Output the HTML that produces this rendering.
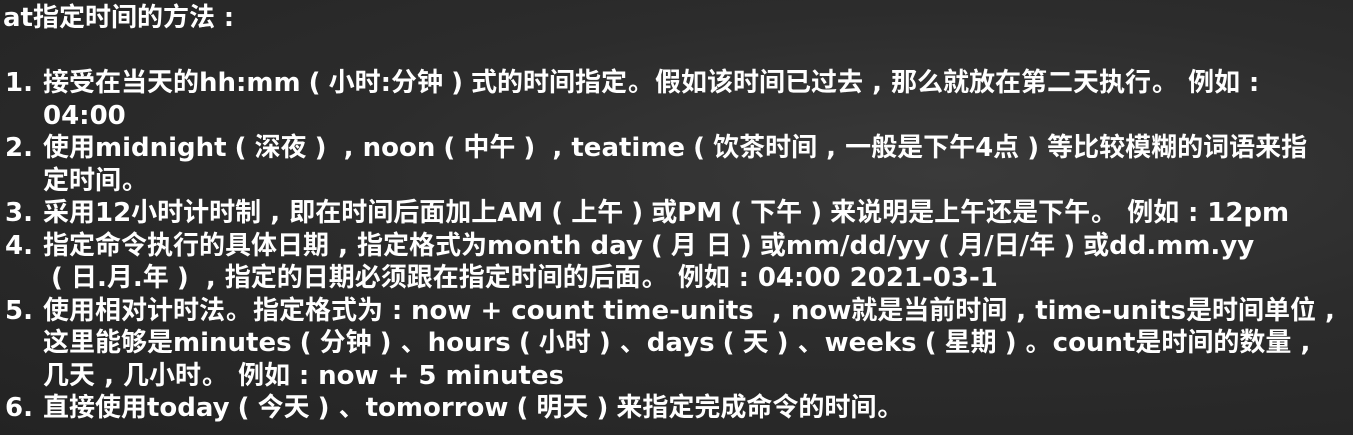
<!DOCTYPE html>
<html><head><meta charset="utf-8"><style>
html,body{margin:0;padding:0}
body{width:1353px;height:435px;overflow:hidden;background:radial-gradient(ellipse at 70% 40%,#3a3a3a 0%,#2c2c2c 45%,#232323 100%);color:#fff;font-family:"DejaVu Sans","Noto Sans CJK SC",sans-serif;font-weight:bold;font-size:26px;}
.w{position:absolute;left:0;top:2px;line-height:32.5px;white-space:nowrap}
.l{position:relative;padding-left:43px;height:32.5px}
.n{position:absolute;left:5px}
.t{padding-left:3px}
i{font-style:normal;display:inline-block;width:28px;text-align:center}
</style></head><body><div class="w">
<div class="t">at指定时间的方法<i>:</i></div>
<div>&nbsp;</div>
<div class="l"><span class="n">1.</span>接受在当天的hh:mm<i>(</i>小时:分钟<i>)</i>式的时间指定<i>。</i>假如该时间已过去<i>,</i>那么就放在第二天执行<i>。</i> 例如<i>:</i></div>
<div class="l">04:00</div>
<div class="l"><span class="n">2.</span>使用midnight<i>(</i>深夜<i>)</i><i>,</i>noon<i>(</i>中午<i>)</i><i>,</i>teatime<i>(</i>饮茶时间<i>,</i>一般是下午4点<i>)</i>等比较模糊的词语来指</div>
<div class="l">定时间<i>。</i></div>
<div class="l"><span class="n">3.</span>采用12小时计时制<i>,</i>即在时间后面加上AM<i>(</i>上午<i>)</i>或PM<i>(</i>下午<i>)</i>来说明是上午还是下午<i>。</i> 例如<i>:</i>12pm</div>
<div class="l"><span class="n">4.</span>指定命令执行的具体日期<i>,</i>指定格式为month day<i>(</i>月 日<i>)</i>或mm/dd/yy<i>(</i>月/日/年<i>)</i>或dd.mm.yy</div>
<div class="l"><i>(</i>日.月.年<i>)</i><i>,</i>指定的日期必须跟在指定时间的后面<i>。</i> 例如<i>:</i>04:00 2021-03-1</div>
<div class="l"><span class="n">5.</span>使用相对计时法<i>。</i>指定格式为<i>:</i>now + count time-units <i>,</i>now就是当前时间<i>,</i>time-units是时间单位<i>,</i></div>
<div class="l">这里能够是minutes<i>(</i>分钟<i>)</i><i>、</i>hours<i>(</i>小时<i>)</i><i>、</i>days<i>(</i>天<i>)</i><i>、</i>weeks<i>(</i>星期<i>)</i><i>。</i>count是时间的数量<i>,</i></div>
<div class="l">几天<i>,</i>几小时<i>。</i> 例如<i>:</i>now + 5 minutes</div>
<div class="l"><span class="n">6.</span>直接使用today<i>(</i>今天<i>)</i><i>、</i>tomorrow<i>(</i>明天<i>)</i>来指定完成命令的时间<i>。</i></div>
</div></body></html>
